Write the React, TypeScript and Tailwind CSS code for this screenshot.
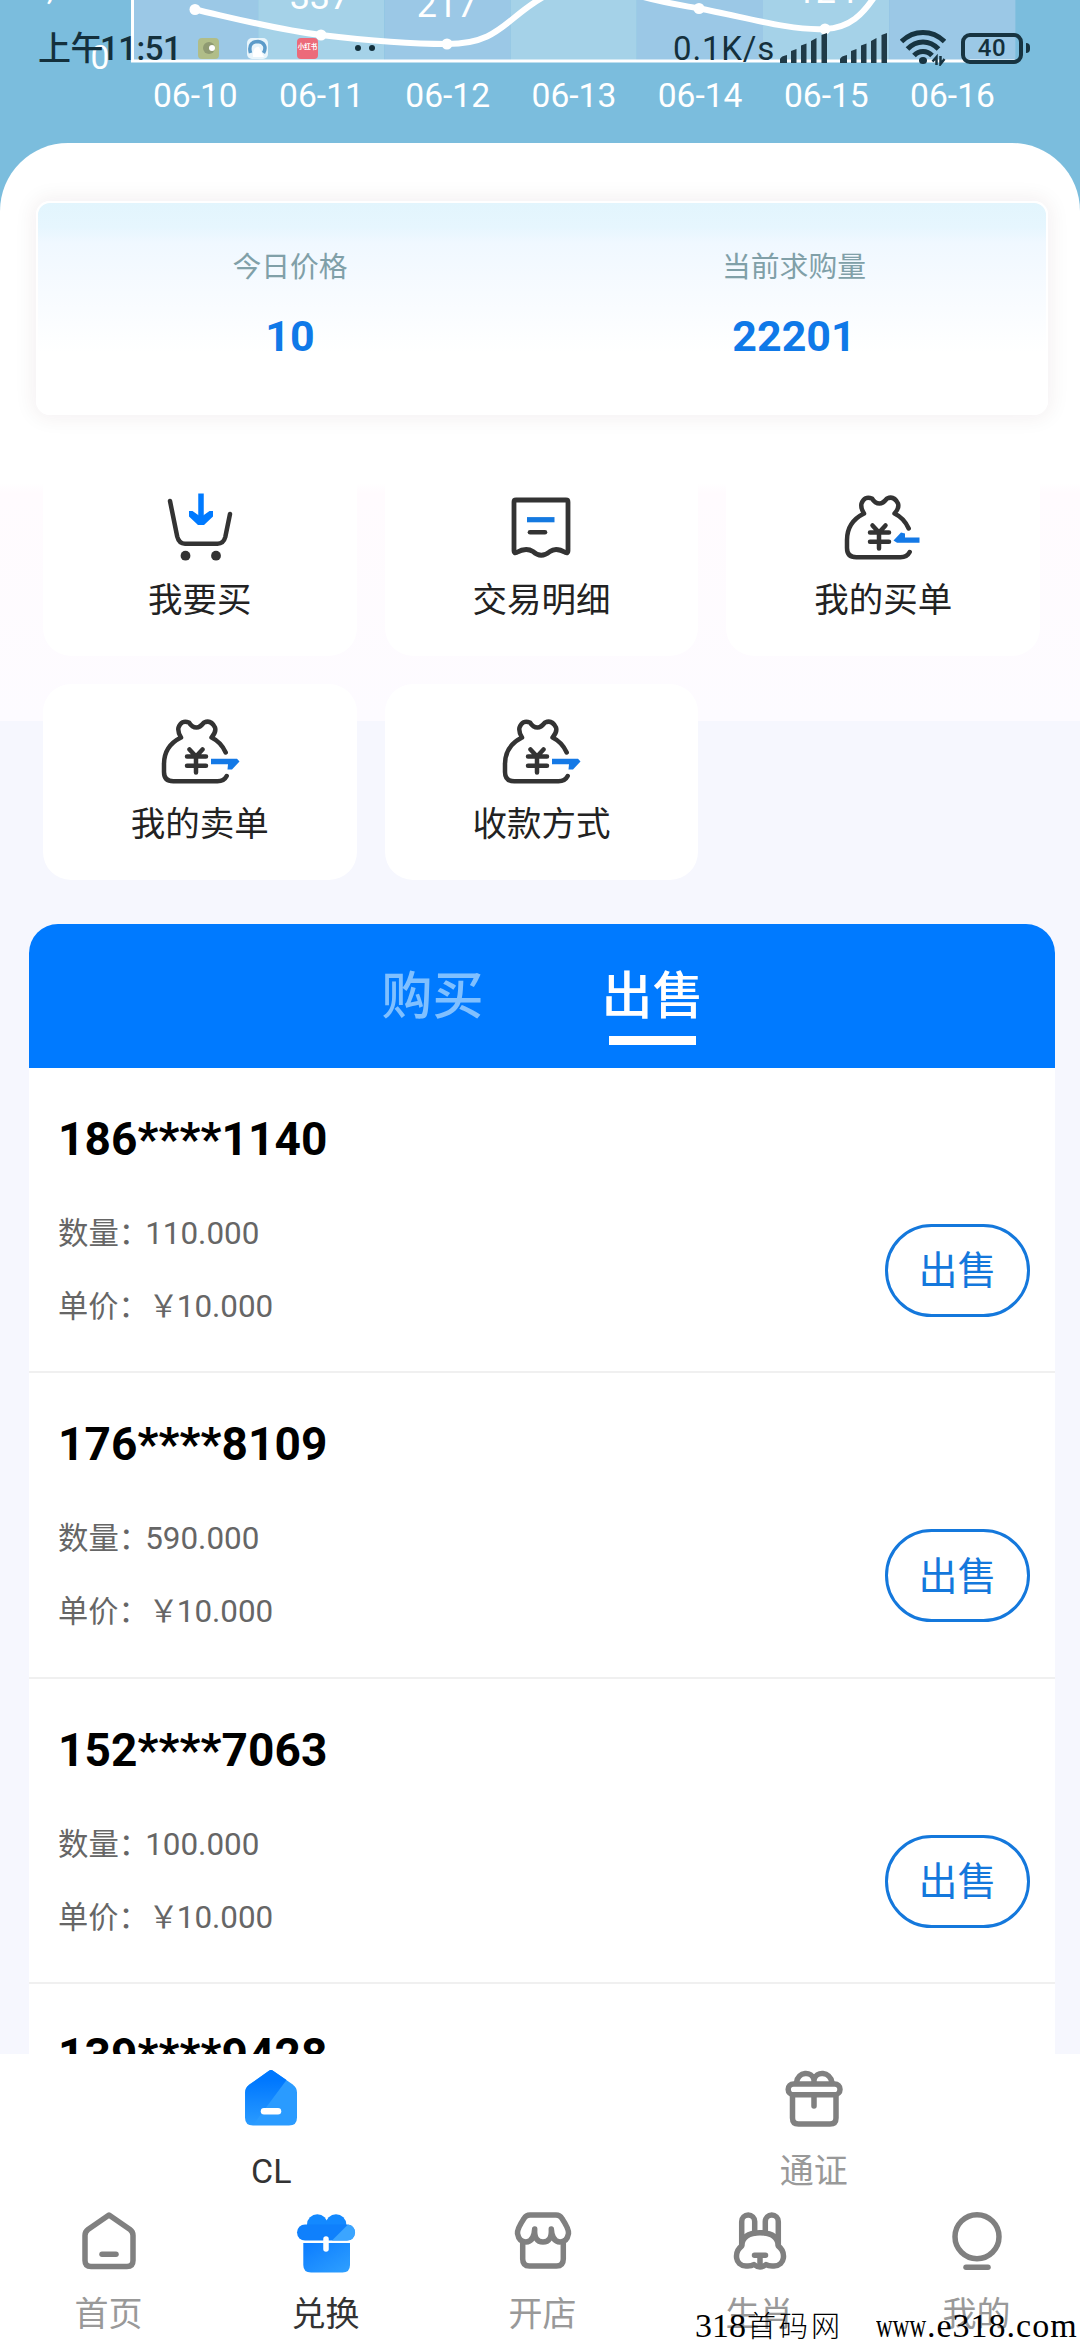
import type { ReactNode } from "react";

type Order = {
  phone: string;
  amount: string;
  price: string;
};

const orders: Order[] = [
  { phone: "186****1140", amount: "110.000", price: "10.000" },
  { phone: "176****8109", amount: "590.000", price: "10.000" },
  { phone: "152****7063", amount: "100.000", price: "10.000" },
  { phone: "139****9428", amount: "200.000", price: "10.000" },
];

const dates = ["06-10", "06-11", "06-12", "06-13", "06-14", "06-15", "06-16"];

const points = [
  [195, 9.5],
  [321, 35],
  [447, 44],
  [699, 8.5],
  [825, 29],
];

function PriceChart() {
  return (
    <svg width="1080" height="143" viewBox="0 0 1080 143" className="block font-['Roboto',sans-serif]">
      {dates.map((d, i) => (
        <rect key={d} x={132 + i * 126.2} y="0" width="126.2" height="60" fill={i % 2 === 0 ? "#9bc8e6" : "#a5d2e8"} />
      ))}
      <path d="M132.5 0V61.5M131 61H1015" stroke="#fff" strokeWidth="3" />
      <path
        d="M195 9.5C237 19 279 30 321 35C363 40 405 44 447 44C500 44 505 18 545 -4M640 -4C660 2 680 5 699 8.5C741 16 790 31 825 29C850 28 863 14 875 -4"
        stroke="#fff"
        strokeWidth="6"
        fill="none"
      />
      {points.map(([x, y]) => (
        <circle key={x} cx={x} cy={y} r="5.5" fill="#fff" />
      ))}
      <g fill="#fff" textAnchor="middle" fontSize="36">
        <text x="320" y="8.5">337</text>
        <text x="447" y="17">217</text>
        <text x="826" y="2.5">124</text>
      </g>
      <g fill="#fff" textAnchor="middle" fontSize="33.6">
        <text x="50" y="0">,</text>
        <text x="100" y="69">0</text>
        {dates.map((d, i) => (
          <text key={d} x={195.3 + i * 126.2} y="107">{d}</text>
        ))}
      </g>
    </svg>
  );
}

function SignalIcon() {
  return (
    <svg width="48" height="30" viewBox="0 0 48 30" fill="#1f3a47">
      <path d="M0 30v-4q1-3 7-4v8zM11 30V18l5.500-2v14zM21 30V12.500l5.500-2V30zM31 30V8l5.500-3v25zM41.500 30V2l5.500-2v30z" />
    </svg>
  );
}

function WifiIcon() {
  return (
    <svg width="46" height="36" viewBox="0 0 46 36" fill="none" stroke="#173441" strokeWidth="5">
      <path d="M1.500 11.500C14-.5 32-.5 44.500 11.500M7.500 19C16.500 9.500 29.500 9.500 38.500 19M14 25.500C19 20 27 20 32 25.500" />
      <ellipse cx="23" cy="30.500" rx="4" ry="3.500" fill="#173441" stroke="none" />
      <path d="M36.500 35v-8l-4 4.500M40.500 26v8l4-5" strokeWidth="2.500" />
    </svg>
  );
}

function StatusBar() {
  return (
    <div className="absolute left-0 top-0 flex h-[96px] w-full items-center pl-[38px] pr-[50px] text-[33px] text-[#14303c]">
      <span className="w-[160px] whitespace-nowrap pt-px font-medium leading-[40px] tracking-[-0.5px]">
        <span className="-mr-[3px]">上午</span>11:51
      </span>
      <span className="flex size-[21px] items-center justify-center rounded bg-[#b0bd88]">
        <span className="flex size-3 items-center justify-end rounded-full bg-[#8f9a72]">
          <span className="size-1.5 rounded-full bg-white" />
        </span>
      </span>
      <svg width="21" height="21" viewBox="0 0 21 21" className="ml-7">
        <rect width="21" height="21" rx="5" fill="#e9f5fb" />
        <path d="M3.500 15C1 6 6 3.500 11 3.500C17 4 20 9 16.500 15" stroke="#5c9bc9" strokeWidth="3.500" fill="none" />
        <path d="M6 19C5 12 9 8 12 9L17 19z" fill="#fff" />
      </svg>
      <span className="ml-[29px] flex size-[21px] items-center justify-center whitespace-nowrap rounded bg-[#ec6a7a] text-[6.500px] font-bold text-white">小红书</span>
      <span className="ml-[37px] flex gap-2">
        <span className="size-1.5 rounded-full bg-[#14303c]" />
        <span className="size-1.5 rounded-full bg-[#14303c]" />
      </span>
      <span className="ml-auto mr-[5px] pt-px tracking-[0.8px]">0.1K/s</span>
      <span className="mr-3"><SignalIcon /></span>
      <SignalIcon />
      <span className="ml-3"><WifiIcon /></span>
      <span className="ml-[15px] flex h-[31px] w-[62px] items-center justify-center rounded-[9px] border-4 border-[#173441] text-[24px] font-medium tracking-[0.5px]">40</span>
      <span className="ml-[3px] h-2.5 w-1 rounded-r bg-[#173441]" />
    </div>
  );
}

function CartIcon() {
  return (
    <svg width="72" height="72" viewBox="0 0 72 72" fill="none" strokeLinecap="round" className="overflow-visible">
      <path d="M6 13L13.200 48.500Q15 55.700 21 55.700H53.500Q59.500 55.700 61.300 49L66 26" stroke="#333" strokeWidth="4.500" />
      <circle cx="21.500" cy="67.700" r="4.900" fill="#333" />
      <circle cx="52" cy="67.700" r="4.900" fill="#333" />
      <path d="M37 5.500V34" stroke="#007aff" strokeWidth="5.500" strokeLinecap="butt" />
      <path d="M25 23H28.500L37 29L45.500 23H49V28.500L40 37H34L25 28.500z" fill="#007aff" />
    </svg>
  );
}

function ReceiptIcon() {
  return (
    <svg width="72" height="72" viewBox="0 0 72 72" fill="none" className="overflow-visible">
      <path
        d="M11 12H61Q63 12 63 14V63Q63 65.500 60.500 64.500Q51 59 45 63.500Q36 71 28 63.500Q21 59 11.500 64.500Q9 65.500 9 63V14Q9 12 11 12Z"
        stroke="#333"
        strokeWidth="4.800"
      />
      <path d="M22 31.700H49.500" stroke="#1479e0" strokeWidth="5.200" />
      <path d="M25 44.300H40" stroke="#333" strokeWidth="4.600" strokeLinecap="round" />
    </svg>
  );
}

function BagIcon({ incoming }: { incoming?: boolean }) {
  return (
    <svg width="72" height="72" viewBox="0 0 72 72" fill="none" strokeLinecap="round" strokeLinejoin="round" className="overflow-visible">
      <g stroke="#333" strokeWidth="4.500">
        <path d="M61.700 40.500Q57 30 47.500 25.500Q52.500 20 51 15.500Q47 7.500 40 10.500Q36 15.500 32.500 15.500Q28 15.500 25 10.500Q17.500 7.500 14.500 15.500Q13.500 20 17 25.500Q0 34 0 52V60Q0 69.300 9.300 69.300H53.500Q60 69.300 62.700 64" />
        <path d="M25.500 37.500L32 44.500L38.500 37.500M32 44.500V60.500M23 44.500H42M23 53.700H42" />
      </g>
      {incoming ? (
        <path d="M72.500 49.500V54.800H50L46.500 52.500L54 44.500L58 45.500V49.500Z" fill="#1479e6" />
      ) : (
        <path d="M47 46.800H73L75.500 49.500L68 57.500L63.500 57.500L64 52.200H47Z" fill="#1479e6" />
      )}
    </svg>
  );
}

const actions: { label: string; icon: ReactNode }[] = [
  { label: "我要买", icon: <CartIcon /> },
  { label: "交易明细", icon: <ReceiptIcon /> },
  { label: "我的买单", icon: <BagIcon incoming /> },
  { label: "我的卖单", icon: <BagIcon /> },
  { label: "收款方式", icon: <BagIcon /> },
];

const HOUSE = "M32 6L53 20.500Q56 22.700 56 26.500V51.500Q56 57.500 50 57.500H14Q8 57.500 8 51.500V26.500Q8 22.700 11 20.500Z";

function NavSvg({ children }: { children: ReactNode }) {
  return (
    <svg width="64" height="64" viewBox="0 0 64 64" fill="none" stroke="#808080" strokeWidth="5.500" strokeLinecap="round" strokeLinejoin="round">
      {children}
    </svg>
  );
}

function HomeFilledIcon() {
  return (
    <svg width="64" height="64" viewBox="0 0 64 64">
      <defs>
        <linearGradient id="house" x1="0" y1="0" x2="0" y2="1">
          <stop offset="0.2" stopColor="#0078ff" />
          <stop offset="1" stopColor="#0078ff" stopOpacity="0" />
        </linearGradient>
      </defs>
      <path d={HOUSE} fill="#2a9bff" stroke="#2a9bff" strokeWidth="4" strokeLinejoin="round" />
      <path d="M29.500 5Q32 2.800 34.500 5L47.500 14L14 59Q6.200 58 6.200 51.500V26.500Q6.200 22 10 19Z" fill="url(#house)" />
      <path d="M25 45.200H39" stroke="#fff" strokeWidth="6.500" strokeLinecap="round" />
    </svg>
  );
}

function HomeIcon() {
  return (
    <NavSvg>
      <path d={HOUSE} />
      <path d="M25 45.200H39" />
    </NavSvg>
  );
}

function GiftFilledIcon() {
  return (
    <svg width="64" height="64" viewBox="0 0 64 64">
      <defs>
        <linearGradient id="gift" x1="0" y1="0" x2="1" y2="1">
          <stop offset="0" stopColor="#0b7cff" />
          <stop offset="1" stopColor="#2fa0ff" />
        </linearGradient>
      </defs>
      <circle cx="23.300" cy="15.500" r="10.300" fill="#1389ff" />
      <circle cx="42" cy="15.500" r="10.300" fill="#1389ff" />
      <rect x="3" y="15.500" width="58" height="16" rx="8" fill="#0f80fc" />
      <path d="M54 15.500Q61 17 61 23.500Q60 31.500 53 31.500H38z" fill="#3ba5ff" />
      <path d="M9.300 34H56V56Q56 63.500 48.500 63.500H17Q9.300 63.500 9.300 56Z" fill="url(#gift)" />
      <path d="M32 30V40" stroke="#fff" strokeWidth="5.500" strokeLinecap="round" />
    </svg>
  );
}

function GiftIcon() {
  return (
    <NavSvg>
      <path d="M14.500 16.500C16 5 30 5 32 13.500C34 5 48 5 50 16.500M32 13V17" />
      <rect x="6.200" y="18" width="51.800" height="10.700" rx="5.300" />
      <path d="M10.500 29V52Q10.500 58 16.500 58H48Q54 58 54 52V29M32 29V40" />
    </NavSvg>
  );
}

function ShopIcon() {
  return (
    <NavSvg>
      <path d="M19 6H45Q49 6 51 9.500Q58 20 57.500 24.500Q56 33 49 33Q41 32.500 40.300 20Q41 33 32 33Q23 33 23.700 20Q23 32.500 15 33Q8 33 6.500 24.500Q6 20 13 9.500Q15 6 19 6Z" />
      <path d="M11.700 33V50Q11.700 57 18.500 57H45.500Q52.300 57 52.300 50V33" />
    </NavSvg>
  );
}

function RabbitIcon() {
  return (
    <NavSvg>
      <path d="M13.700 36V12.500A6.500 6.500 0 0 1 26.700 12.500V24M37.300 24V12.500A6.500 6.500 0 0 1 50.300 12.500V36" />
      <path d="M13.700 37C14 28 20 23.700 32 23.700S50 28 50.300 37C58 43 57.500 56.500 46 57Q41 57.500 38 55.500Q35 58 32 58T26 55.500Q23 57.500 18 57C6.500 56.500 6 43 13.700 37Z" />
      <path d="M26.500 46.300H37.500M32 46.300V57" />
    </NavSvg>
  );
}

function MineIcon() {
  return (
    <NavSvg>
      <circle cx="32" cy="27.700" r="22" />
      <path d="M21 58.300H43" />
    </NavSvg>
  );
}

interface NavItemProps {
  icon: ReactNode;
  label: string;
  active?: boolean;
}

function NavItem({ icon, label, active }: NavItemProps) {
  return (
    <div className="flex flex-1 flex-col items-center">
      {icon}
      <span className={active ? "mt-[17px] text-[34px] leading-[48px] text-[#333]" : "mt-[17px] text-[34px] leading-[48px] text-[#999]"}>
        {label}
      </span>
    </div>
  );
}

function OrderRow({ order }: { order: Order }) {
  return (
    <div className="flex h-[305.400px] justify-between border-b-2 border-[#f0f0f0] pl-[29px] pr-[25px]">
      <div className="pt-[44px]">
        <p className="text-[46px] font-bold leading-[54px] tracking-[0.1px] text-black">{order.phone}</p>
        <div className="mt-[31px] text-[31.400px] leading-[73px] text-[#666]">
          <p>
            <span className="-mr-[4px] text-[30.400px]">数量：</span>{order.amount}
          </p>
          <p>
            <span className="-mr-[2px] text-[30.200px]">单价：￥</span>{order.price}
          </p>
        </div>
      </div>
      <button className="mt-[156px] h-[93px] w-[145px] rounded-full border-[3px] border-[#1478dc] pt-0.5 text-[39px] text-[#1478dc]">出售</button>
    </div>
  );
}

export default function App() {
  return (
    <div className="relative flex h-[2340px] w-[1080px] flex-col overflow-hidden bg-white font-['Roboto','Noto_Sans_CJK_SC',sans-serif]">
      <main className="h-[2054px] overflow-hidden bg-[#7bbddd]">
        <PriceChart />
        <div className="h-[2000px] rounded-t-[68px] bg-[linear-gradient(#fff_0px,#fff_340px,#fffbfe_350px,#fdfbff_578px,#f6f7fe_578px)] pt-[58px]">
          <section className="ml-9 flex h-[214px] w-[1012px] rounded-[14px] border-2 border-white bg-[linear-gradient(#e2f5fd_0px,#e6f6fe_24px,#f0f8ff_40px,#f7fbff_90px,#fff_150px)] text-center shadow-[0_0_20px_4px_rgba(60,20,40,0.06)]">
            <div className="flex-1 pt-[43px]">
              <p className="text-[28.800px] leading-[42px] text-[#80a0a8]">今日价格</p>
              <p className="mt-[23px] text-[43px] font-bold leading-[50px] text-[#0f79e8]">10</p>
            </div>
            <div className="flex-1 pt-[43px]">
              <p className="text-[28.800px] leading-[42px] text-[#80a0a8]">当前求购量</p>
              <p className="mt-[23px] text-[43px] font-bold leading-[50px] text-[#0f79e8]">22201</p>
            </div>
          </section>

          <section className="ml-[43px] mt-[45px] grid w-[997px] grid-cols-3 gap-7">
            {actions.map(({ label, icon }) => (
              <div key={label} className="flex h-[196px] flex-col items-center rounded-[28px] bg-white pt-7">
                {icon}
                <span className="mt-[15px] text-[34.500px] leading-[50px] text-[#222]">{label}</span>
              </div>
            ))}
          </section>

          <section className="ml-[29px] mt-[44px] w-[1026px] overflow-hidden rounded-t-[29px] bg-white">
            <div className="flex h-[144px] justify-center gap-[118px] bg-[#007aff] pl-px pt-[37px] text-[51px] font-medium leading-[72px]">
              <div className="text-[#80c0ff]">购买</div>
              <div className="flex flex-col items-center text-white">
                出售
                <span className="mt-[3px] h-[9px] w-[87px] bg-white" />
              </div>
            </div>
            {orders.map(order => (
              <OrderRow key={order.phone} order={order} />
            ))}
          </section>
        </div>
      </main>

      <nav className="h-[286px] w-[1085px] bg-white pt-3">
        <div className="flex">
          <NavItem icon={<HomeFilledIcon />} label="CL" active />
          <NavItem icon={<GiftIcon />} label="通证" />
        </div>
        <div className="mt-[14px] flex">
          <NavItem icon={<HomeIcon />} label="首页" />
          <NavItem icon={<GiftFilledIcon />} label="兑换" active />
          <NavItem icon={<ShopIcon />} label="开店" />
          <NavItem icon={<RabbitIcon />} label="生肖" />
          <NavItem icon={<MineIcon />} label="我的" />
        </div>
      </nav>

      <StatusBar />

      <div className="absolute bottom-[-4px] left-[695px] flex items-baseline whitespace-nowrap font-['Liberation_Serif','Noto_Sans_CJK_SC',serif] text-[34px] leading-[34px] text-black">
        <span className="w-[52px]">318</span>
        <span className="w-[129px] font-light text-[29px] tracking-[3px]">首码网</span>
        <span className="w-[51px] origin-left scale-x-[0.68]">www</span>
        <span className="tracking-[1px]">.e318.com</span>
      </div>
    </div>
  );
}
